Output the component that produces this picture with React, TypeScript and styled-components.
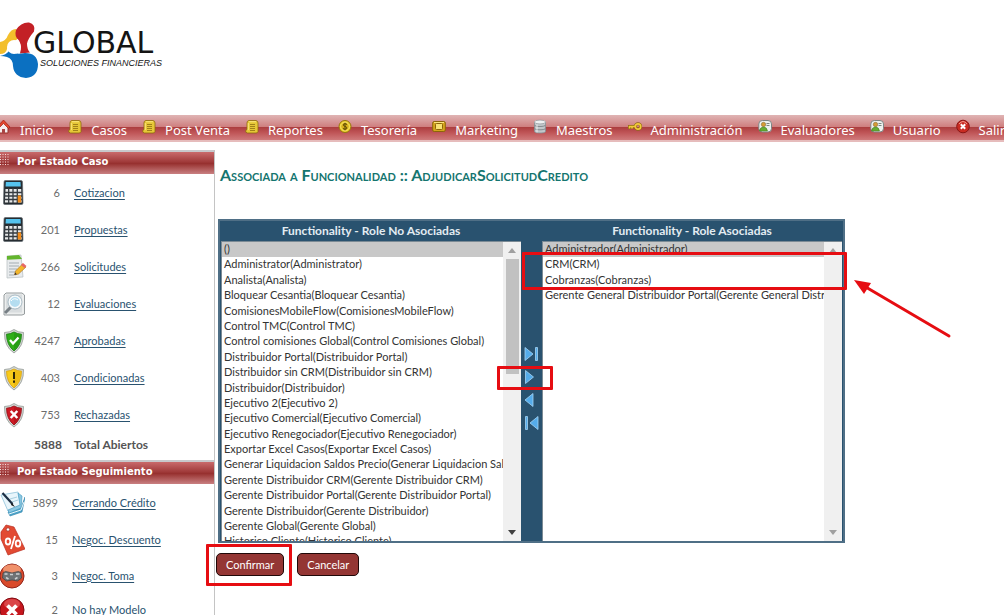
import React from "react";
import styled, { createGlobalStyle } from "styled-components";

const GlobalStyle = createGlobalStyle`
  * { box-sizing: border-box; }
  body { margin: 0; background: #fff; font-family: "Noto Sans", "Open Sans", sans-serif; }
`;

const Page = styled.div`
  height: 100vh;
  overflow: hidden;
  display: flex;
  flex-direction: column;
`;

const Brand = styled.header`
  flex: none;
  display: flex;
  height: 115px;
  padding-top: 20px;
`;

const BrandMark = styled.svg`
  flex: none;
  width: 38px;
  height: 60px;
`;

const BrandText = styled.div`
  display: flex;
  flex-direction: column;
  padding-top: 9px;
  margin-left: -5px;
  color: #141414;
`;

const BrandName = styled.span`
  font: 30px/28px "DejaVu Sans", sans-serif;
`;

const BrandTagline = styled.span`
  padding-left: 7px;
  font: italic 9px/12px "Liberation Sans", sans-serif;
  white-space: nowrap;
`;

const MenuBar = styled.nav`
  flex: none;
  display: flex;
  gap: 15px;
  height: 27px;
  border-bottom: 2px solid #e6bcbc;
  background: linear-gradient(#e0b4b4 0, #cf8080 46%, #ad3f40 50%, #bf5456 70%, #d07a7b 100%);
`;

const MenuLink = styled.a`
  flex: none;
  display: flex;
  gap: 9px;
  color: #fff;
  font-size: 13px;
  line-height: 30px;
  text-decoration: none;
  white-space: nowrap;
  svg { width: 14px; height: 16px; margin-top: 4px; }
  &:first-child { margin-left: -3px; }
`;

const Body = styled.div`
  flex: 1;
  min-height: 0;
  display: flex;
`;

const Sidebar = styled.aside`
  flex: none;
  width: 215px;
  margin-top: 8px;
  border-right: 1px solid #c4c4c4;
`;

const SectionTitle = styled.h2`
  display: flex;
  gap: 8px;
  height: 24px;
  margin: 0;
  border-top: 2px solid #c8c8cb;
  background: linear-gradient(#c96a6b 0, #a03a3a 45%, #97302f 52%, #c98081 100%);
  color: #fff;
  font: bold 10px/20px "DejaVu Sans", sans-serif;
  svg { width: 9px; height: 12px; margin-top: 1px; }
`;

const StatusList = styled.ul<{ $compact?: boolean }>`
  list-style: none;
  margin: 0;
  padding: 0 0 0 ${(p) => (p.$compact ? 0 : 2)}px;
`;

const StatusRow = styled.li<{ $height?: number }>`
  display: flex;
  align-items: center;
  height: ${(p) => p.$height ?? 37}px;
  font: 11px/16px Lato, sans-serif;
  svg { flex: none; width: 25px; height: 32px; }
`;

const Count = styled.span`
  width: 33px;
  margin-right: 14px;
  color: #6c6c6c;
  text-align: right;
`;

const StatusLink = styled.a`
  color: #29526f;
  text-underline-offset: 2px;
`;

const Total = styled.p`
  display: flex;
  gap: 12px;
  height: 27px;
  margin: 0;
  padding-left: 34px;
  color: #555;
  font: bold 12px/24px Lato, sans-serif;
`;

const Main = styled.main`
  flex: 1;
  min-width: 0;
  padding: 23px 3px;
`;

const Title = styled.h1`
  margin: 0 0 34px 2px;
  color: #14756f;
  font: bold small-caps 16px/20px Lato, sans-serif;
`;

const Picker = styled.section`
  display: grid;
  grid-template-columns: 300px 21px 300px;
  grid-template-rows: 20px 300px;
  width: max-content;
  padding: 0 1px;
  border: 2px solid #4f6f86;
  background: #29526f;
`;

const PickerLabel = styled.label<{ $column: number }>`
  grid-column: ${(p) => p.$column};
  color: #e3ecf2;
  font: bold 12px/20px Lato, sans-serif;
  text-align: center;
`;

const ListPane = styled.div<{ $column: number }>`
  grid-column: ${(p) => p.$column};
  grid-row: 2;
  position: relative;
  display: flex;
  background: #fff;
`;

const RoleSelect = styled.select`
  flex: 1;
  min-width: 0;
  height: 300px;
  padding: 0;
  overflow: hidden;
  border: 1px solid #7b8a94;
  border-width: 1px 0 0 1px;
  border-radius: 0;
  outline: none;
  background: #fff;
  color: #333;
  font: 11px Lato, sans-serif;
  scrollbar-width: none;
  option { height: 1.4em; min-height: 0; padding: 0 2px; color: #333; }
  option:checked { background: #c8c8c8 linear-gradient(#c8c8c8, #c8c8c8); }
`;

const Track = styled.div`
  display: flex;
  flex-direction: column;
  align-items: center;
  width: 18px;
  padding: 6px 2px;
  border-top: 1px solid #7b8a94;
  background: #f0f0f0;
  svg { flex: none; width: 8px; height: 5px; }
`;

const Thumb = styled.div<{ $visible: boolean }>`
  width: 13px;
  height: 115px;
  margin: 6px 0 auto;
  background: ${(p) => (p.$visible ? "#c1c1c1" : "transparent")};
`;

const Transfer = styled.div`
  grid-column: 2;
  grid-row: 2;
  position: relative;
  display: flex;
  flex-direction: column;
  align-items: center;
  gap: 7px;
  padding-top: 105px;
`;

const TransferButton = styled.button`
  display: flex;
  padding: 0;
  border: 0;
  background: none;
  svg { width: 15px; height: 16px; }
`;

const Actions = styled.div`
  display: flex;
  gap: 13px;
  margin: 10px 0 0 -2px;
`;

const ActionSlot = styled.div`
  position: relative;
  display: flex;
`;

const ActionButton = styled.button`
  height: 23px;
  padding: 0 9px;
  border: 1px solid #200808;
  border-radius: 5px;
  background: #943634;
  color: #fff;
  font: 11px/20px Lato, sans-serif;
`;

const Highlight = styled.span<{ $inset: string }>`
  position: absolute;
  z-index: 1;
  inset: ${(p) => p.$inset};
  border: 3px solid #e60d12;
  border-radius: 1px;
  pointer-events: none;
`;

const Pointer = styled.svg`
  position: absolute;
  z-index: 1;
  left: 310px;
  top: 34px;
  width: 100px;
  height: 64px;
`;

/* ---- menu icons, 14 x 16 ---- */
const HouseIcon = () => (
  <svg viewBox="0 0 14 16"><path d="M2 8v6h9V8L6.500 3z" fill="#f5eeee" stroke="#99302b" /><path d="M0 8 6.500 1 13 8l-1.500 1.500-5-5-5 5z" fill="#e2452d" stroke="#9d2016" strokeWidth=".7" /><path d="M5 14v-4h3v4z" fill="#a44" /></svg>
);
const ScrollIcon = () => (
  <svg viewBox="0 0 14 16"><path d="M3.500 1.500h7.500q2 .3 2 2.500v8.500q-.3 1.500-2 1.500H2.500Q.6 13.700.6 12q.2-1.200 1.400-1.500V4Q2 2 3.500 1.500z" fill="#e6c737" stroke="#8e6b0d" strokeWidth=".8" /><path d="M5 5.500h5M5 7.500h5M5 9.500h5M5 11.500h5" stroke="#8f6f12" strokeWidth=".8" /><path d="M4 2.700h7M3.300 4v7" fill="none" stroke="#fbe57d" /></svg>
);
const CoinIcon = () => (
  <svg viewBox="0 0 14 16"><circle cx="7" cy="7.500" r="6" fill="#edcd26" stroke="#94760f" /><circle cx="7" cy="7.500" r="4.300" fill="#d7b21b" stroke="#fff08a" strokeWidth=".7" /><path d="M9 5.500Q7 4 5.500 5.300q-.8 1.500 1.500 2.100 2.500.6 1.600 2.200Q7 11 5 9.500M7 3.800v7.500" fill="none" stroke="#5c4706" /></svg>
);
const ScreenIcon = () => (
  <svg viewBox="0 0 14 16"><rect x=".7" y="2.500" width="12.600" height="10" rx="1.500" fill="#d6a51c" stroke="#8c6509" /><rect x="3.500" y="4.500" width="7" height="6" rx="1" fill="#f8e273" stroke="#8c6509" /><path d="M2 3.500h10" stroke="#fbe57d" /></svg>
);
const DatabaseIcon = () => (
  <svg viewBox="0 0 14 16"><path d="M1.500 3v9.500c0 2 11 2 11 0V3z" fill="#c1c7ca" stroke="#878e93" strokeWidth=".8" /><ellipse cx="7" cy="3" rx="5.500" ry="1.900" fill="#eef1f2" stroke="#939a9e" strokeWidth=".7" /><path d="M1.500 6c0 2 11 2 11 0M1.500 9.300c0 2 11 2 11 0" fill="none" stroke="#838a8e" /><path d="M4 5.500v8" stroke="#fff" opacity=".7" /></svg>
);
const KeyIcon = () => (
  <svg viewBox="0 0 14 16"><path d="M7 7.500H1.500v2.500M4 7.500v2" fill="none" stroke="#8e6b16" strokeWidth="3" /><circle cx="10" cy="7.500" r="2.700" fill="none" stroke="#8e6b16" strokeWidth="3" /><path d="M7 7.500H1.500v2M4 7.500v2" fill="none" stroke="#f3ca3b" strokeWidth="1.600" /><circle cx="10" cy="7.500" r="2.700" fill="none" stroke="#f3ca3b" strokeWidth="1.700" /></svg>
);
const CardIcon = () => (
  <svg viewBox="0 0 14 16"><rect x=".8" y="1.500" width="12.700" height="11.500" rx="3.500" fill="#edf1ef" stroke="#7e8584" /><path d="M8.500 4.500h3M8.500 6.500h3" stroke="#7b8682" /><circle cx="5.500" cy="5.500" r="2.200" fill="#d69c35" stroke="#765f2a" strokeWidth=".5" /><path d="M1.500 12Q2 8 5.500 8T9.500 12z" fill="#65ae32" stroke="#41751e" strokeWidth=".5" /></svg>
);
const ExitIcon = () => (
  <svg viewBox="0 0 14 16"><circle cx="7" cy="7.500" r="6.300" fill="#c92b22" stroke="#8a1715" /><path d="M3 5q4-5 8 0" stroke="#f19a8c" fill="none" /><path d="m4.800 5.300 4.400 4.400m0-4.400L4.800 9.700" stroke="#fff" strokeWidth="2" /></svg>
);

/* ---- sidebar icons, 25 x 32 ---- */
const CalculatorIcon = () => (
  <svg viewBox="0 0 25 32"><path d="M3 3.500h16q1.500 0 1.500 1.500l.5 21q0 1.500-1.500 1.500H3Q1.300 27.500 1.500 26L2 5q0-1.500 1-1.500z" fill="#262c31" stroke="#626a70" strokeWidth=".7" /><path d="M3.800 5h14.700l.3 4.500H3.500z" fill="#55c3ee" /><path d="M3.500 12h15.700l.5 13.500H2.900z" fill="#e7e9e9" /><path d="M6.700 11v15M11 11v15M15.300 11v15M2 15.500h18M2 19h18M2 22.500h18" stroke="#353b40" strokeWidth="1.300" /><path d="M15.700 18.500H19l.3 7h-3.500z" fill="#f28b19" /></svg>
);
const FormIcon = () => (
  <svg viewBox="0 0 25 32"><path d="m5 5 14-1 2 22-16 1z" fill="#e8ebed" stroke="#b4bbbf" strokeWidth=".7" /><path d="m5 5 12-1 3 4-15 .8z" fill="#63b52d" /><path d="M7 12h10M7 15h10M7 18h8M7 21h7M7 24h5" stroke="#a3adb3" /><path d="m12.500 24 1-4 7-7 3.500 3-7.500 7z" fill="#f2b72c" stroke="#a76c15" strokeWidth=".6" /><path d="m19 14 2-2 3.500 3-2 2z" fill="#e76767" /><path d="m12.500 24 .7-2.500 1.700 1.700z" fill="#333" /></svg>
);
const LensIcon = () => (
  <svg viewBox="0 0 25 32"><path d="M4 5h16l2.500 2v19L20 27H2V7z" fill="#eceeee" stroke="#969c9e" /><path d="M4 6.500h16v18H4z" fill="#d9dddf" /><path d="m3 25 6-6" stroke="#777f85" strokeWidth="3" /><circle cx="13" cy="14" r="6" fill="#b4ddf0" stroke="#f7fafb" strokeWidth="2" /><circle cx="13" cy="14" r="7" fill="none" stroke="#8da5b1" strokeWidth=".7" /><path d="M9 13q3-4 7-1" stroke="#fff" fill="none" /></svg>
);
const Shield = ({ fill, dark, children }: { fill: string; dark: string; children: React.ReactNode }) => (
  <svg viewBox="0 0 25 32"><path d="M12 4.500q4 3 9.500 3 .5 14-9.500 20.500Q2 21.500 2.500 7.500 8 7.500 12 4.500z" fill="#d4d8d5" stroke="#858c87" strokeWidth=".7" /><path d="M12 7q3.500 2 7.500 2.200Q19.500 20 12 26 4.500 20 4.500 9.200 8.500 9 12 7z" fill={fill} stroke={dark} strokeWidth=".8" /><path d="M12 8v17Q18 20 18.700 10q-4-.5-6.700-2z" fill={dark} opacity=".35" />{children}</svg>
);
const ApprovedIcon = () => (
  <Shield fill="#2fae18" dark="#187b10"><path d="m8 15 3 3.500 5.500-6" fill="none" stroke="#fff" strokeWidth="2.300" /></Shield>
);
const ConditionIcon = () => (
  <Shield fill="#f8cb1a" dark="#d99f0b"><path d="M12 10v7M12 18.500v2.200" stroke="#2d2609" strokeWidth="2" /></Shield>
);
const RejectedIcon = () => (
  <Shield fill="#cf1a24" dark="#8d0d15"><path d="m8.700 12 6.600 7m0-7-6.600 7" stroke="#fff" strokeWidth="2.500" /></Shield>
);
const ContractIcon = () => (
  <svg viewBox="0 0 25 32"><path d="m8 25 13-4 4-11-3 15-12 4z" fill="#4da3c8" stroke="#2f83ab" strokeWidth=".6" /><path d="M1 8 18 5l3 13-13 6z" fill="#e8f5fb" stroke="#8fc2d9" strokeWidth=".8" /><path d="m18 6 4 3-1 12-12 5-1-3 12-5z" fill="#8bc8e2" stroke="#4d9fc4" strokeWidth=".7" /><path d="m9 27 12-4 3-8" fill="none" stroke="#eaf7fc" /><path d="m10 12 7-2M12 15l6-2" stroke="#a9cfe0" /><path d="m2.500 6 10 11" stroke="#1c2f45" strokeWidth="2.200" /><path d="m12 16 3 4-4-2z" fill="#111" /></svg>
);
const DiscountIcon = () => (
  <svg viewBox="0 0 25 32"><path d="M1 8 6 1l8 2 11 22-17 6L1 15z" fill="#e24a32" stroke="#b92d20" strokeWidth=".7" /><circle cx="8" cy="5.500" r="1.700" fill="#fff" stroke="#9d2820" strokeWidth=".7" /><g fill="none" stroke="#fff" strokeWidth="1.800"><ellipse cx="8" cy="17.500" rx="2.300" ry="3" /><ellipse cx="18" cy="19.500" rx="2.300" ry="3" /><path d="m15 12-4 13" /></g></svg>
);
const TradeIcon = () => (
  <svg viewBox="0 0 25 32"><circle cx="12" cy="16" r="12" fill="#d94a2b" stroke="#8f241b" /><ellipse cx="12" cy="9.500" rx="9" ry="5" fill="#f5a27c" opacity=".8" /><path d="M3 13q2-2.500 5-1l4 1 4-1q3-1.500 5 1l.5 5-4 3-5.500-1-5.500 1-4-3z" fill="#6f7375" stroke="#3d4143" strokeWidth=".7" /><path d="M4.500 14h3M10 14.500h3M16 14h3.500M6 17.500l2.500 1.500M15 19l2.500-1.500" stroke="#cdd1d2" strokeWidth="1.500" /></svg>
);
const NoModelIcon = () => (
  <svg viewBox="0 0 25 32"><circle cx="12" cy="16" r="12" fill="#c5161d" stroke="#810b11" /><ellipse cx="12" cy="10" rx="8" ry="5" fill="#ef7474" opacity=".5" /><path d="m7.500 11.500 9 9m0-9-9 9" stroke="#fff" strokeWidth="3.800" /></svg>
);
const GripIcon = () => (
  <svg viewBox="0 0 9 12"><path d="M.5 1v11M3 1v11M5.500 1v11M8 1v11" stroke="#f6dede" strokeDasharray="1 1.500" /></svg>
);

const UpArrow = () => <svg viewBox="0 0 8 5"><path d="M0 5 4 0l4 5z" fill="#a0a0a0" /></svg>;
const DownArrow = ({ active }: { active: boolean }) => (
  <svg viewBox="0 0 8 5"><path d="M0 0h8L4 5z" fill={active ? "#404040" : "#a0a0a0"} /></svg>
);

const menu = [
  { label: "Inicio", Icon: HouseIcon },
  { label: "Casos", Icon: ScrollIcon },
  { label: "Post Venta", Icon: ScrollIcon },
  { label: "Reportes", Icon: ScrollIcon },
  { label: "Tesorería", Icon: CoinIcon },
  { label: "Marketing", Icon: ScreenIcon },
  { label: "Maestros", Icon: DatabaseIcon },
  { label: "Administración", Icon: KeyIcon },
  { label: "Evaluadores", Icon: CardIcon },
  { label: "Usuario", Icon: CardIcon },
  { label: "Salir", Icon: ExitIcon },
];

const caseStates = [
  { count: 6, label: "Cotizacion", Icon: CalculatorIcon },
  { count: 201, label: "Propuestas", Icon: CalculatorIcon },
  { count: 266, label: "Solicitudes", Icon: FormIcon },
  { count: 12, label: "Evaluaciones", Icon: LensIcon },
  { count: 4247, label: "Aprobadas", Icon: ApprovedIcon },
  { count: 403, label: "Condicionadas", Icon: ConditionIcon },
  { count: 753, label: "Rechazadas", Icon: RejectedIcon },
];

const followStates = [
  { count: 5899, label: "Cerrando Crédito", Icon: ContractIcon, height: 37 },
  { count: 15, label: "Negoc. Descuento", Icon: DiscountIcon, height: 37 },
  { count: 3, label: "Negoc. Toma", Icon: TradeIcon, height: 35 },
  { count: 2, label: "No hay Modelo", Icon: NoModelIcon, height: 33 },
];

const available = [
  "()",
  "Administrator(Administrator)",
  "Analista(Analista)",
  "Bloquear Cesantia(Bloquear Cesantia)",
  "ComisionesMobileFlow(ComisionesMobileFlow)",
  "Control TMC(Control TMC)",
  "Control comisiones Global(Control Comisiones Global)",
  "Distribuidor Portal(Distribuidor Portal)",
  "Distribuidor sin CRM(Distribuidor sin CRM)",
  "Distribuidor(Distribuidor)",
  "Ejecutivo 2(Ejecutivo 2)",
  "Ejecutivo Comercial(Ejecutivo Comercial)",
  "Ejecutivo Renegociador(Ejecutivo Renegociador)",
  "Exportar Excel Casos(Exportar Excel Casos)",
  "Generar Liquidacion Saldos Precio(Generar Liquidacion Saldos Precio)",
  "Gerente Distribuidor CRM(Gerente Distribuidor CRM)",
  "Gerente Distribuidor Portal(Gerente Distribuidor Portal)",
  "Gerente Distribuidor(Gerente Distribuidor)",
  "Gerente Global(Gerente Global)",
  "Historico Cliente(Historico Cliente)",
];

const assigned = [
  "Administrador(Administrador)",
  "CRM(CRM)",
  "Cobranzas(Cobranzas)",
  "Gerente General Distribuidor Portal(Gerente General Distribuidor Portal)",
];

const transfers = [
  { name: "Agregar todas", shape: "M1 1.500 9 8l-8 6.500zM11.500 1.500h2v13h-2z" },
  { name: "Agregar", shape: "M1.500 1.500 9.500 8l-8 6.500z" },
  { name: "Quitar", shape: "M9 1.500 1 8l8 6.500z" },
  { name: "Quitar todas", shape: "M14 1.500 6 8l8 6.500zM1.500 1.500h2v13h-2z" },
];

const RoleList = ({ id, column, roles, scrollable, children }: {
  id: string; column: number; roles: string[]; scrollable: boolean; children?: React.ReactNode;
}) => (
  <ListPane $column={column}>
    <RoleSelect id={id} multiple defaultValue={[roles[0]]}>
      {roles.map((role) => <option key={role}>{role}</option>)}
    </RoleSelect>
    <Track aria-hidden="true">
      <UpArrow />
      <Thumb $visible={scrollable} />
      <DownArrow active={scrollable} />
    </Track>
    {children}
  </ListPane>
);

export default function App() {
  return (
    <Page>
      <GlobalStyle />
      <Brand>
        <BrandMark viewBox="0 0 38 60">
          <path d="M0 22q6-1 8-7 3-6 8-6l3 8q-2 3-5 4-6 2-7 8-1 5-7 5z" fill="#f3bf2c" />
          <path d="M16 10Q21 2 29 2.500q7 2 5 9-6 7-7 12 0 6 3 9l-10 1q2-8-1-13-5-4-3-10.500z" fill="#c32026" />
          <path d="M9 31q6 4 16 2 12 0 13 11 0 13-12 14-12-1-13-12 0-7-6-9-3-1-7-1 6-1 9-5z" fill="#0b70c1" />
          <circle cx="14" cy="27" r="7" fill="#fff" />
        </BrandMark>
        <BrandText>
          <BrandName>GLOBAL</BrandName>
          <BrandTagline>SOLUCIONES FINANCIERAS</BrandTagline>
        </BrandText>
      </Brand>

      <MenuBar>
        {menu.map(({ label, Icon }) => (
          <MenuLink key={label} href="#"><Icon />{label}</MenuLink>
        ))}
      </MenuBar>

      <Body>
        <Sidebar>
          <SectionTitle><GripIcon />Por Estado Caso</SectionTitle>
          <StatusList>
            {caseStates.map(({ count, label, Icon }) => (
              <StatusRow key={label}><Icon /><Count>{count}</Count><StatusLink href="#">{label}</StatusLink></StatusRow>
            ))}
          </StatusList>
          <Total><span>5888</span><span>Total Abiertos</span></Total>
          <SectionTitle><GripIcon />Por Estado Seguimiento</SectionTitle>
          <StatusList $compact>
            {followStates.map(({ count, label, Icon, height }) => (
              <StatusRow key={label} $height={height}><Icon /><Count>{count}</Count><StatusLink href="#">{label}</StatusLink></StatusRow>
            ))}
          </StatusList>
        </Sidebar>

        <Main>
          <Title>Associada a Funcionalidad :: AdjudicarSolicitudCredito</Title>
          <Picker>
            <PickerLabel $column={1} htmlFor="available">Functionality - Role No Asociadas</PickerLabel>
            <PickerLabel $column={3} htmlFor="assigned">Functionality - Role Asociadas</PickerLabel>
            <RoleList id="available" column={1} roles={available} scrollable />
            <Transfer>
              {transfers.map(({ name, shape }) => (
                <TransferButton key={name} type="button" aria-label={name}>
                  <svg viewBox="0 0 15 16"><path d={shape} fill="#55acea" stroke="#a6d4f5" strokeWidth=".8" /></svg>
                </TransferButton>
              ))}
              <Highlight $inset="125px -11px 151px -24px" />
            </Transfer>
            <RoleList id="assigned" column={3} roles={assigned} scrollable={false}>
              <Highlight $inset="11px -5px 251px -20px" />
              <Pointer viewBox="0 0 100 64">
                <path d="M12 11 97 61" stroke="#e60d12" strokeWidth="3" strokeLinecap="round" />
                <path d="m2 5 17 3-7 11z" fill="#e60d12" />
              </Pointer>
            </RoleList>
          </Picker>
          <Actions>
            <ActionSlot>
              <ActionButton type="button">Confirmar</ActionButton>
              <Highlight $inset="-9px -8px -10px -10px" />
            </ActionSlot>
            <ActionSlot><ActionButton type="button">Cancelar</ActionButton></ActionSlot>
          </Actions>
        </Main>
      </Body>
    </Page>
  );
}
